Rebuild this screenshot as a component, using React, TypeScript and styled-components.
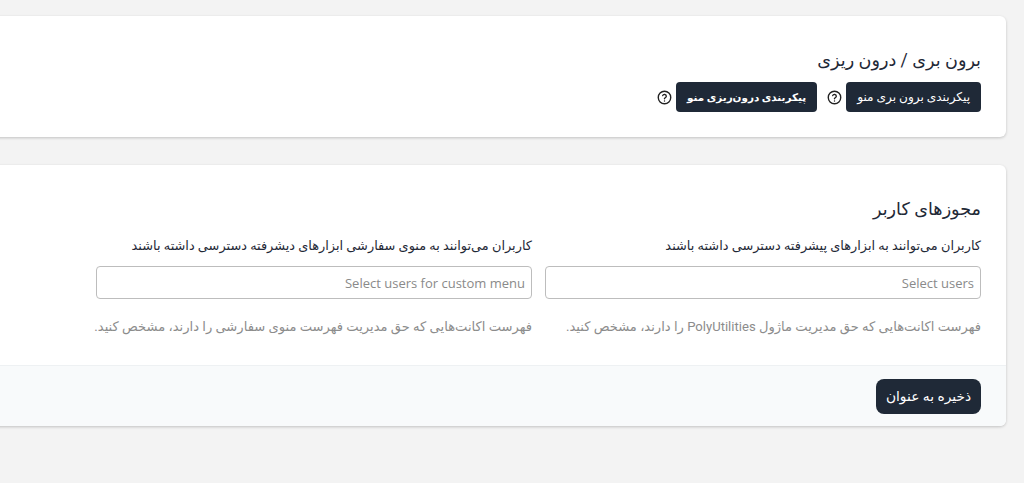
import React from "react";
import styled, { createGlobalStyle } from "styled-components";

const Global = createGlobalStyle`
  html, body { margin: 0; padding: 0; background: #f3f3f3; overflow: hidden; }
  body { font-family: Roboto, "DejaVu Sans", sans-serif; }
  #root { height: 483px; overflow: hidden; }
`;

const Page = styled.main`
  direction: rtl;
  width: 1026px;
  margin-left: -20px;
  padding: 16px 18px 0 0;
  display: flex;
  flex-direction: column;
  gap: 28px;
`;

const Card = styled.section`
  background: #fff;
  border-radius: 6px;
  box-shadow: 0 1px 3px rgba(0, 0, 0, 0.2);
  overflow: hidden;
`;

const CardBody = styled.div<{ $top: number; $bottom: number }>`
  padding: ${(p) => p.$top}px 25px ${(p) => p.$bottom}px 116px;
`;

const Title = styled.h2`
  margin: 0;
  font-size: 17.6px;
  line-height: 24px;
  font-weight: 400;
  color: #1f2937;
`;

const Actions = styled.div`
  display: flex;
  align-items: center;
  margin-top: 10px;
  height: 30px;
`;

const DarkButton = styled.button<{ $bold?: boolean }>`
  height: 30px;
  padding: 0 11px;
  border: 0;
  border-radius: 4px;
  background: #1f2937;
  color: #fff;
  font-family: Roboto, "DejaVu Sans", sans-serif;
  font-size: ${(p) => (p.$bold ? 10.4 : 12.1)}px;
  font-weight: ${(p) => (p.$bold ? 700 : 400)};
  white-space: nowrap;
`;

const HelpIcon = styled.svg`
  width: 15px;
  height: 15px;
  margin-inline: 4px 10px;
  color: #222;
`;

const Grid = styled.div`
  display: grid;
  grid-template-columns: 436px 436px;
  column-gap: 13px;
  margin-top: 16px;
`;

const Field = styled.div`
  display: flex;
  flex-direction: column;
`;

const Label = styled.label`
  font-size: 12.9px;
  line-height: 18px;
  color: #1f2937;
  font-weight: 500;
  white-space: nowrap;
`;

const Input = styled.input`
  box-sizing: border-box;
  width: 100%;
  height: 33px;
  margin-top: 11px;
  padding: 0 6px;
  border: 1px solid #bdbdbd;
  border-radius: 4px;
  background: #fff;
  direction: rtl;
  font-family: "Open Sans", sans-serif;
  font-size: 13px;
  outline: none;
  &::placeholder { color: #8a8a8a; opacity: 1; }
`;

const Help = styled.p`
  margin: 19px 0 0;
  font-size: 13.1px;
  line-height: 18px;
  color: #8c8c8c;
  white-space: nowrap;
`;

const Footer = styled.footer`
  display: flex;
  align-items: center;
  height: 60px;
  padding-right: 25px;
  border-top: 1px solid #eef1f3;
  background: #f8fafb;
`;

const SaveButton = styled.button`
  height: 35px;
  width: 105px;
  border: 0;
  border-radius: 8px;
  background: #1f2937;
  color: #fff;
  font-family: Roboto, "DejaVu Sans", sans-serif;
  font-size: 13.8px;
  white-space: nowrap;
`;

const Question = () => (
  <HelpIcon viewBox="0 0 24 24" fill="none" stroke="currentColor" strokeWidth="2.2" strokeLinecap="round" strokeLinejoin="round">
    <circle cx="12" cy="12" r="10" />
    <path d="M9.1 9a3 3 0 0 1 5.8 1c0 2-3 2.6-3 4" />
    <path d="M12 17.5h.01" />
  </HelpIcon>
);

export default function App() {
  return (
    <>
      <Global />
      <Page>
        <Card>
          <CardBody $top={32} $bottom={25}>
            <Title>برون بری / درون ریزی</Title>
            <Actions>
              <DarkButton>پیکربندی برون بری منو</DarkButton>
              <Question />
              <DarkButton $bold>پیکربندی درون‌ریزی منو</DarkButton>
              <Question />
            </Actions>
          </CardBody>
        </Card>
        <Card>
          <CardBody $top={32} $bottom={29}>
            <Title>مجوزهای کاربر</Title>
            <Grid>
              <Field>
                <Label>کاربران می‌توانند به ابزارهای پیشرفته دسترسی داشته باشند</Label>
                <Input placeholder="Select users" />
                <Help>فهرست اکانت‌هایی که حق مدیریت ماژول PolyUtilities را دارند، مشخص کنید.</Help>
              </Field>
              <Field>
                <Label>کاربران می‌توانند به منوی سفارشی ابزارهای دیشرفته دسترسی داشته باشند</Label>
                <Input placeholder="Select users for custom menu" />
                <Help>فهرست اکانت‌هایی که حق مدیریت فهرست منوی سفارشی را دارند، مشخص کنید.</Help>
              </Field>
            </Grid>
          </CardBody>
          <Footer>
            <SaveButton>ذخیره به عنوان</SaveButton>
          </Footer>
        </Card>
      </Page>
    </>
  );
}
